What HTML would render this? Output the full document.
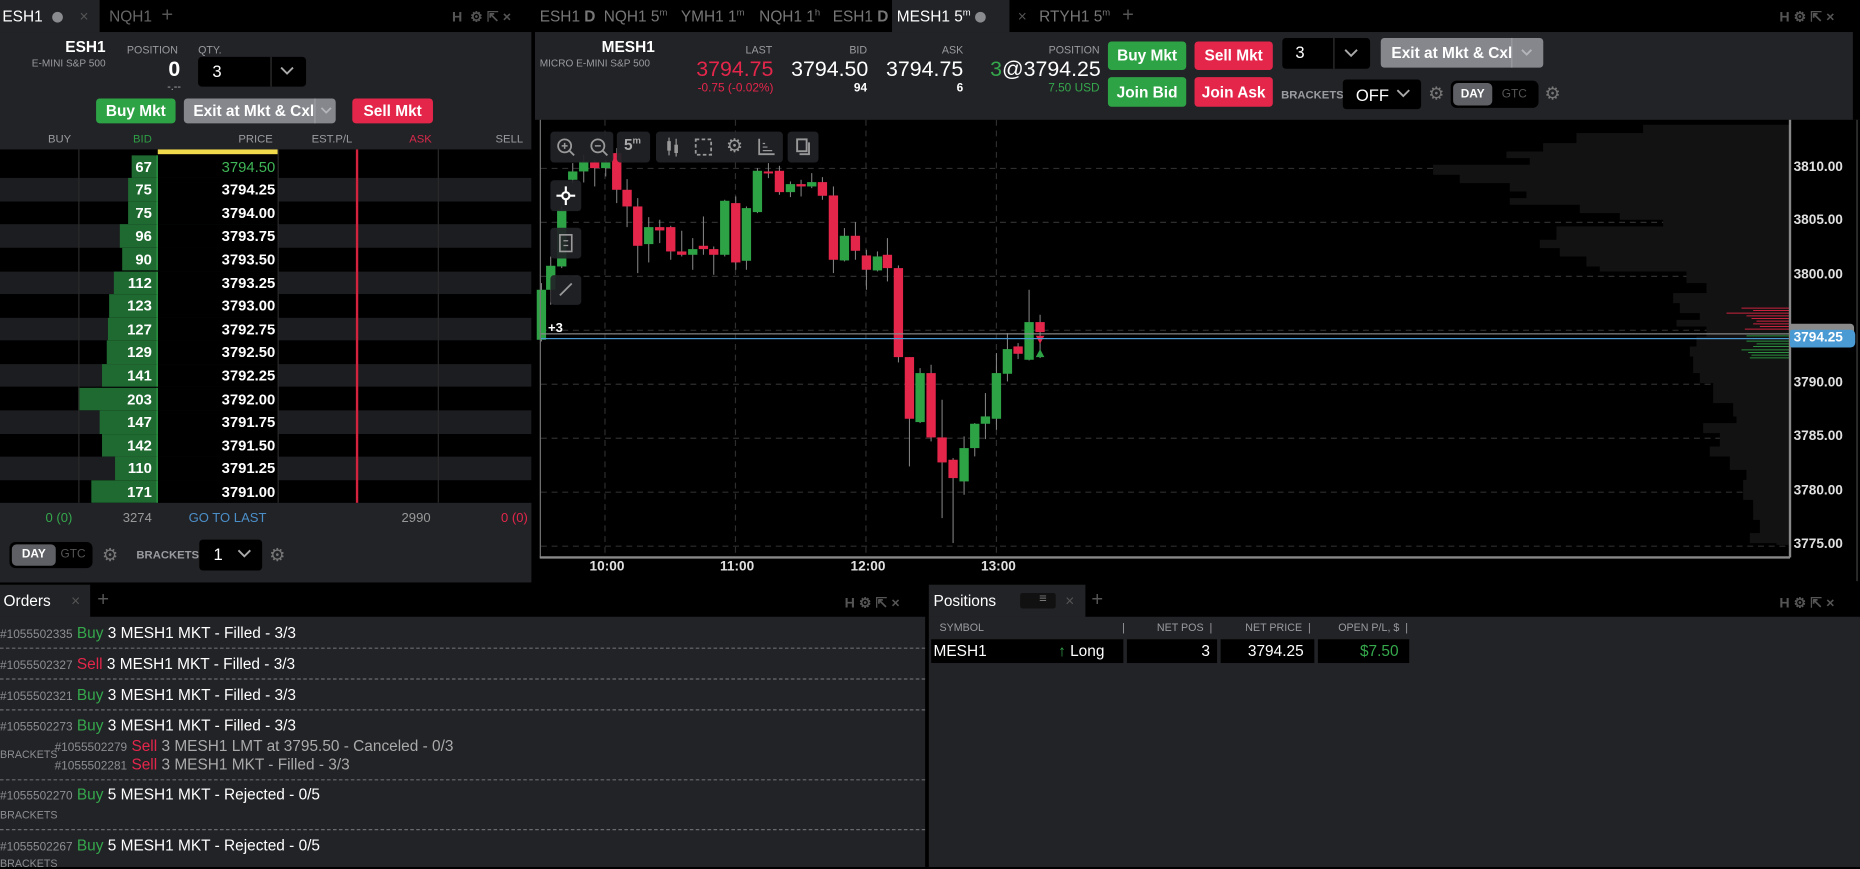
<!DOCTYPE html>
<html><head><meta charset="utf-8"><style>
*{box-sizing:border-box;margin:0;padding:0}
html,body{width:1860px;height:867px;overflow:hidden;background:#000;font-family:"Liberation Sans",sans-serif;color:#fff}
#w{position:absolute;left:0;top:0;width:1568px;height:731px;transform:scale(1.18622,1.18605);transform-origin:0 0;background:#000}
.a{position:absolute;white-space:nowrap}
.pan{background:#222327}
.lbl{font-size:9px;color:#9a9ba0}
.r{text-align:right}
.btn{position:absolute;border-radius:3px;font-size:13px;text-align:center;color:#fff;font-weight:bold}
.g{background:#2ea346}.rd{background:#e4264b}.gy{background:#85878d}
.blk{position:absolute;background:#000;border-radius:3px}
.ico{color:#555;font-size:12px;font-weight:bold}
.row{position:absolute;left:0;width:448px;height:19.6px}
.tb{position:absolute;background:#222327;border-radius:3px;opacity:.92}
.ord{position:absolute;left:0;font-size:13px;color:#fff}
.ord i{font-style:normal;font-size:10px;color:#8d8e92}
.gr{color:#35a84c}.rr{color:#e4264b}
.sep{position:absolute;left:0;width:780px;border-top:1px dashed #6a6b70}
.pl{position:absolute;left:1512px;font-size:11.5px;color:#e0e0e0;font-weight:bold}
</style></head><body><div id="w">

<!-- LEFT PANEL -->
<div class="a" style="left:0;top:0;width:448px;height:27px;background:#000"></div>
<div class="a pan" style="left:0;top:0;width:84px;height:27px"></div>
<div class="a" style="left:2px;top:6px;font-size:13px">ESH1</div>
<div class="a" style="left:44px;top:10px;width:9px;height:9px;border-radius:50%;background:#8a8b8f"></div>
<div class="a" style="left:67px;top:6px;font-size:13px;color:#555">×</div>
<div class="a" style="left:92px;top:6px;font-size:13px;color:#666">NQH1</div>
<div class="a" style="left:136px;top:3px;font-size:17px;color:#555">+</div>
<div class="a ico" style="left:381px;top:7px">H &nbsp;⚙ ⇱ ×</div>

<div class="a pan" style="left:0;top:27px;width:448px;height:464px"></div>
<div class="a r" style="left:0;width:89px;top:32px;font-size:13px;font-weight:bold">ESH1</div>
<div class="a r lbl" style="left:0;width:89px;top:48px;font-size:8.5px">E-MINI S&amp;P 500</div>
<div class="a lbl" style="left:107px;top:37px">POSITION</div>
<div class="a r" style="left:100px;width:52px;top:48px;font-size:18px;font-weight:bold">0</div>
<div class="a" style="left:141px;top:68px;font-size:9px;color:#aaa">-.--</div>
<div class="a lbl" style="left:167px;top:37px">QTY.</div>
<div class="blk" style="left:167px;top:48px;width:91px;height:25px"></div>
<div class="a" style="left:179px;top:52px;font-size:14px">3</div>
<div class="a" style="left:228px;top:48px;width:1px;height:25px;background:#333"></div>
<svg class="a" style="left:236px;top:56px" width="12" height="8"><polyline points="1,1 6,6 11,1" fill="none" stroke="#aaa" stroke-width="1.6"/></svg>
<div class="btn g" style="left:81px;top:83px;width:67px;height:21px;line-height:21px">Buy Mkt</div>
<div class="btn gy" style="left:155px;top:83px;width:128px;height:21px;line-height:21px;text-align:left;padding-left:8px">Exit at Mkt &amp; Cxl</div>
<div class="a" style="left:265px;top:83px;width:1px;height:21px;background:#9c9ea3"></div>
<svg class="a" style="left:270px;top:90px" width="10" height="7"><polyline points="1,1 5,5 9,1" fill="none" stroke="#b5b6ba" stroke-width="1.5"/></svg>
<div class="btn rd" style="left:297px;top:83px;width:68px;height:21px;line-height:21px">Sell Mkt</div>

<div class="a lbl r" style="left:0;width:60px;top:112px;font-size:9.5px">BUY</div>
<div class="a lbl r" style="left:66px;width:62px;top:112px;font-size:9.5px;color:#2e9e45">BID</div>
<div class="a lbl r" style="left:133px;width:97px;top:112px;font-size:9.5px">PRICE</div>
<div class="a lbl r" style="left:234px;width:63px;top:112px;font-size:9.5px">EST.P/L</div>
<div class="a lbl r" style="left:301px;width:63px;top:112px;font-size:9.5px;color:#d9294b">ASK</div>
<div class="a lbl r" style="left:369px;width:72px;top:112px;font-size:9.5px">SELL</div>

<div class="a" style="left:0;top:126px;width:448px;height:298px;background:#000;overflow:hidden">
<div id="lad"></div>
</div>
<div class="a" style="left:133px;top:126px;width:101px;height:4px;background:#f0d94a"></div>
<div class="a" style="left:300px;top:126px;width:2px;height:298px;background:#d4233f"></div>

<div class="a pan" style="left:0;top:424px;width:448px;height:67px"></div>
<div class="a r gr" style="left:0;width:61px;top:431px;font-size:11px">0 (0)</div>
<div class="a r" style="left:66px;width:62px;top:431px;font-size:11px;color:#999">3274</div>
<div class="a" style="left:159px;top:431px;font-size:11px;color:#4b8fc9">GO TO LAST</div>
<div class="a r" style="left:301px;width:62px;top:431px;font-size:11px;color:#999">2990</div>
<div class="a r rr" style="left:369px;width:76px;top:431px;font-size:11px">0 (0)</div>
<div class="blk" style="left:8px;top:457px;width:70px;height:22px;border-radius:5px"></div>
<div class="a" style="left:10px;top:459px;width:37px;height:18px;background:#5f6065;border-radius:4px;font-size:10px;font-weight:bold;text-align:center;line-height:18px">DAY</div>
<div class="a" style="left:51px;top:462px;font-size:10px;color:#555">GTC</div>
<div class="a" style="left:86px;top:459px;font-size:15px;color:#777">⚙</div>
<div class="a" style="left:115px;top:463px;font-size:9.5px;color:#9a9ba0;font-weight:bold">BRACKETS</div>
<div class="blk" style="left:168px;top:455px;width:53px;height:26px"></div>
<div class="a" style="left:180px;top:459px;font-size:14px">1</div>
<svg class="a" style="left:200px;top:463px" width="12" height="8"><polyline points="1,1 6,6 11,1" fill="none" stroke="#aaa" stroke-width="1.6"/></svg>
<div class="a" style="left:227px;top:459px;font-size:15px;color:#777">⚙</div>

<!-- RIGHT CHART PANEL -->
<div class="a pan" style="left:752px;top:0;width:99px;height:27px"></div>
<div class="a" style="left:455px;top:6px;font-size:13px;color:#777">ESH1 <b>D</b></div>
<div class="a" style="left:509px;top:6px;font-size:13px;color:#777">NQH1 5<sup style="font-size:8px">m</sup></div>
<div class="a" style="left:574px;top:6px;font-size:13px;color:#777">YMH1 1<sup style="font-size:8px">m</sup></div>
<div class="a" style="left:640px;top:6px;font-size:13px;color:#777">NQH1 1<sup style="font-size:8px">h</sup></div>
<div class="a" style="left:702px;top:6px;font-size:13px;color:#777">ESH1 <b>D</b></div>
<div class="a" style="left:756px;top:6px;font-size:13px;color:#fff">MESH1 5<sup style="font-size:8px">m</sup></div>
<div class="a" style="left:822px;top:10px;width:9px;height:9px;border-radius:50%;background:#8a8b8f"></div>
<div class="a" style="left:858px;top:6px;font-size:13px;color:#555">×</div>
<div class="a" style="left:876px;top:6px;font-size:13px;color:#777">RTYH1 5<sup style="font-size:8px">m</sup></div>
<div class="a" style="left:946px;top:3px;font-size:17px;color:#555">+</div>
<div class="a ico" style="left:1500px;top:7px">H ⚙ ⇱ ×</div>

<div class="a pan" style="left:451px;top:27px;width:1117px;height:74px"></div>
<div class="a" style="left:1562px;top:27px;width:6px;height:74px;background:#000"></div>
<div class="a r" style="left:455px;width:97px;top:32px;font-size:13px;font-weight:bold">MESH1</div>
<div class="a lbl" style="left:455px;top:48px;font-size:8.5px">MICRO E-MINI S&amp;P 500</div>
<div class="a lbl r" style="left:580px;width:71px;top:37px">LAST</div>
<div class="a r rr" style="left:560px;width:92px;top:48px;font-size:18px">3794.75</div>
<div class="a r rr" style="left:560px;width:92px;top:69px;font-size:10px">-0.75 (-0.02%)</div>
<div class="a lbl r" style="left:660px;width:71px;top:37px">BID</div>
<div class="a r" style="left:640px;width:92px;top:48px;font-size:18px">3794.50</div>
<div class="a r" style="left:660px;width:71px;top:69px;font-size:10px;font-weight:bold">94</div>
<div class="a lbl r" style="left:740px;width:72px;top:37px">ASK</div>
<div class="a r" style="left:720px;width:92px;top:48px;font-size:18px">3794.75</div>
<div class="a r" style="left:740px;width:72px;top:69px;font-size:10px;font-weight:bold">6</div>
<div class="a lbl r" style="left:850px;width:77px;top:37px">POSITION</div>
<div class="a r" style="left:820px;width:108px;top:48px;font-size:18px"><span class="gr">3</span>@3794.25</div>
<div class="a r gr" style="left:850px;width:77px;top:69px;font-size:10px">7.50 USD</div>
<div class="btn g" style="left:934px;top:35px;width:66px;height:24px;line-height:24px">Buy Mkt</div>
<div class="btn rd" style="left:1007px;top:35px;width:66px;height:24px;line-height:24px">Sell Mkt</div>
<div class="btn g" style="left:934px;top:65px;width:66px;height:25px;line-height:25px">Join Bid</div>
<div class="btn rd" style="left:1007px;top:65px;width:66px;height:25px;line-height:25px">Join Ask</div>
<div class="blk" style="left:1081px;top:32px;width:74px;height:26px"></div>
<div class="a" style="left:1092px;top:36px;font-size:14px">3</div>
<div class="a" style="left:1124px;top:32px;width:1px;height:26px;background:#333"></div>
<svg class="a" style="left:1133px;top:41px" width="12" height="8"><polyline points="1,1 6,6 11,1" fill="none" stroke="#aaa" stroke-width="1.6"/></svg>
<div class="btn gy" style="left:1164px;top:32px;width:137px;height:25px;line-height:25px;text-align:left;padding-left:9px">Exit at Mkt &amp; Cxl</div>
<div class="a" style="left:1274px;top:32px;width:1px;height:25px;background:#9c9ea3"></div>
<svg class="a" style="left:1282px;top:41px" width="10" height="7"><polyline points="1,1 5,5 9,1" fill="none" stroke="#b5b6ba" stroke-width="1.5"/></svg>
<div class="a" style="left:1080px;top:75px;font-size:9.5px;color:#9a9ba0;font-weight:bold">BRACKETS</div>
<div class="blk" style="left:1132px;top:67px;width:66px;height:25px"></div>
<div class="a" style="left:1143px;top:72px;font-size:14px">OFF</div>
<svg class="a" style="left:1177px;top:75px" width="12" height="8"><polyline points="1,1 6,6 11,1" fill="none" stroke="#aaa" stroke-width="1.6"/></svg>
<div class="a" style="left:1204px;top:70px;font-size:15px;color:#777">⚙</div>
<div class="blk" style="left:1223px;top:68px;width:74px;height:23px;border-radius:5px"></div>
<div class="a" style="left:1225px;top:70px;width:33px;height:19px;background:#5f6065;border-radius:4px;font-size:10px;font-weight:bold;text-align:center;line-height:19px">DAY</div>
<div class="a" style="left:1266px;top:74px;font-size:10px;color:#555">GTC</div>
<div class="a" style="left:1302px;top:70px;font-size:15px;color:#777">⚙</div>

<!-- chart -->
<svg class="a" style="left:0;top:0" width="1568" height="731">
<g stroke="#2e2e2e" stroke-dasharray="5,4" stroke-width="1">
<line x1="510" y1="101" x2="510" y2="469"/><line x1="620" y1="101" x2="620" y2="469"/><line x1="730" y1="101" x2="730" y2="469"/><line x1="840" y1="101" x2="840" y2="469"/>
<line x1="456" y1="142" x2="1508" y2="142"/><line x1="456" y1="187.5" x2="1508" y2="187.5"/><line x1="456" y1="233" x2="1508" y2="233"/><line x1="456" y1="278.5" x2="1508" y2="278.5"/><line x1="456" y1="324" x2="1508" y2="324"/><line x1="456" y1="369.5" x2="1508" y2="369.5"/><line x1="456" y1="415" x2="1508" y2="415"/><line x1="456" y1="460.5" x2="1508" y2="460.5"/>
</g>
</svg>
<svg class="a" style="left:1180.4px;top:101.2px" width="387.9" height="387.9" viewBox="0 0 1380 1380">
<path fill="#121212" d="M1168 15 H730 V40 H530 V70 H430 V95 H320 V115 H390 V135 H100 V165 H180 V190 H330 V215 H380 V235 H330 V255 H540 V280 H660 V300 H790 V320 H470 V360 H420 V385 H480 V410 H560 V440 H600 V455 H860 V490 H920 V520 H820 V550 H840 V580 H900 V600 H830 V620 H920 V650 H890 V680 H870 V710 H880 V760 H900 V790 H940 V850 H1000 V890 H1010 V910 H910 V940 H960 V980 H930 V1010 H990 V1050 H1040 V1080 H1030 V1140 H1060 V1200 H1080 V1240 H1050 V1270 H1130 V1275 H1168 Z"/>
<g stroke="#c8223f" stroke-width="3"><line x1="1025" y1="565" x2="1168" y2="565"/><line x1="1060" y1="572" x2="1168" y2="572"/><line x1="980" y1="580" x2="1168" y2="580"/><line x1="1040" y1="588" x2="1168" y2="588"/><line x1="1055" y1="596" x2="1168" y2="596"/><line x1="1070" y1="604" x2="1168" y2="604"/><line x1="1060" y1="612" x2="1168" y2="612"/><line x1="1080" y1="620" x2="1168" y2="620"/><line x1="1035" y1="628" x2="1168" y2="628"/></g>
<g stroke="#2a8f3e" stroke-width="3"><line x1="1040" y1="648" x2="1168" y2="648"/><line x1="1060" y1="656" x2="1168" y2="656"/><line x1="1040" y1="664" x2="1168" y2="664"/><line x1="1070" y1="672" x2="1168" y2="672"/><line x1="1060" y1="680" x2="1168" y2="680"/><line x1="1025" y1="690" x2="1168" y2="690"/><line x1="1045" y1="698" x2="1168" y2="698"/><line x1="1055" y1="706" x2="1168" y2="706"/><line x1="1050" y1="714" x2="1168" y2="714"/></g>
</svg>
<svg class="a" style="left:455.3px;top:101.2px;overflow:visible" width="438.4" height="387.8" viewBox="0 0 1560 1380" id="cs"></svg>
<div class="a" style="left:456px;top:280.5px;width:1053px;height:1px;background:#8a8a8a"></div>
<div class="a" style="left:456px;top:285px;width:1053px;height:1px;background:#4a9ad4"></div>
<div class="a" style="left:462px;top:271px;font-size:11px;font-weight:bold">+3</div>
<div class="a" style="left:455px;top:101px;width:1px;height:369px;background:#777"></div>
<div class="a" style="left:455px;top:469px;width:1054px;height:1.5px;background:#888"></div>
<div class="a" style="left:1508px;top:101px;width:1.5px;height:369px;background:#888"></div>
<div class="a" style="left:1565px;top:101px;width:1px;height:389px;background:#444"></div>
<div class="pl" style="top:135px">3810.00</div><div class="pl" style="top:180px">3805.00</div><div class="pl" style="top:226px">3800.00</div>
<div class="pl" style="top:317px">3790.00</div><div class="pl" style="top:362px">3785.00</div><div class="pl" style="top:408px">3780.00</div><div class="pl" style="top:453px">3775.00</div>
<div class="a" style="left:1509px;top:273px;width:54px;height:12px;background:#8a8a8a;border-radius:0 3px 0 0"></div>
<div class="a" style="left:1509px;top:278px;width:55px;height:15px;background:#4a9ad4;border-radius:2px 4px 4px 2px;font-size:11.5px;font-weight:bold;line-height:15px;padding-left:3px">3794.25</div>
<div class="a" style="left:497px;top:472px;font-size:11.5px;font-weight:bold;color:#e0e0e0">10:00</div>
<div class="a" style="left:607px;top:472px;font-size:11.5px;font-weight:bold;color:#e0e0e0">11:00</div>
<div class="a" style="left:717px;top:472px;font-size:11.5px;font-weight:bold;color:#e0e0e0">12:00</div>
<div class="a" style="left:827px;top:472px;font-size:11.5px;font-weight:bold;color:#e0e0e0">13:00</div>

<!-- chart toolbar -->
<div class="tb" style="left:464px;top:111px;width:53px;height:26px"></div>
<svg class="a" style="left:469px;top:116px" width="16" height="16"><circle cx="7" cy="7" r="5.5" fill="none" stroke="#999" stroke-width="1.5"/><line x1="11" y1="11" x2="15" y2="15" stroke="#999" stroke-width="1.6"/><line x1="4.5" y1="7" x2="9.5" y2="7" stroke="#999" stroke-width="1.3"/><line x1="7" y1="4.5" x2="7" y2="9.5" stroke="#999" stroke-width="1.3"/></svg>
<svg class="a" style="left:497px;top:116px" width="16" height="16"><circle cx="7" cy="7" r="5.5" fill="none" stroke="#999" stroke-width="1.5"/><line x1="11" y1="11" x2="15" y2="15" stroke="#999" stroke-width="1.6"/><line x1="4.5" y1="7" x2="9.5" y2="7" stroke="#999" stroke-width="1.3"/></svg>
<div class="tb" style="left:520px;top:111px;width:28px;height:26px"></div>
<div class="a" style="left:526px;top:114px;font-size:13px;font-weight:bold;color:#aaa">5<sup style="font-size:8px">m</sup></div>
<div class="tb" style="left:553px;top:111px;width:107px;height:26px"></div>
<svg class="a" style="left:560px;top:115px" width="14" height="18"><line x1="4" y1="1" x2="4" y2="16" stroke="#999"/><rect x="2.5" y="4" width="3" height="8" fill="#999"/><line x1="10" y1="2" x2="10" y2="17" stroke="#999"/><rect x="8.5" y="7" width="3" height="7" fill="#999"/></svg>
<svg class="a" style="left:585px;top:116px" width="16" height="16"><rect x="1.5" y="1.5" width="13" height="13" fill="none" stroke="#999" stroke-width="1.5" stroke-dasharray="3,2"/></svg>
<div class="a" style="left:612px;top:113px;font-size:16px;color:#999">⚙</div>
<svg class="a" style="left:638px;top:116px" width="16" height="16"><polyline points="2,1 2,14 15,14" fill="none" stroke="#999" stroke-width="1.5"/><line x1="5" y1="11" x2="13" y2="11" stroke="#999"/><line x1="5" y1="8" x2="9" y2="8" stroke="#999"/><line x1="5" y1="5" x2="7" y2="5" stroke="#999"/></svg>
<div class="tb" style="left:664px;top:111px;width:26px;height:26px"></div>
<svg class="a" style="left:670px;top:116px" width="15" height="16"><rect x="2" y="1.5" width="8" height="10" fill="none" stroke="#999" stroke-width="1.6"/><polyline points="12,4 12,14 4,14" fill="none" stroke="#999" stroke-width="1.6"/></svg>
<div class="tb" style="left:464px;top:152px;width:26px;height:26px"></div>
<svg class="a" style="left:469px;top:157px" width="16" height="16"><circle cx="8" cy="8" r="3" fill="none" stroke="#fff" stroke-width="1.8"/><line x1="8" y1="0" x2="8" y2="5" stroke="#fff" stroke-width="1.8"/><line x1="8" y1="11" x2="8" y2="16" stroke="#fff" stroke-width="1.8"/><line x1="0" y1="8" x2="5" y2="8" stroke="#fff" stroke-width="1.8"/><line x1="11" y1="8" x2="16" y2="8" stroke="#fff" stroke-width="1.8"/></svg>
<div class="tb" style="left:464px;top:192px;width:26px;height:26px"></div>
<svg class="a" style="left:471px;top:197px" width="12" height="16"><rect x="1" y="1" width="10" height="14" fill="none" stroke="#999" stroke-width="1.4"/><line x1="4" y1="6" x2="8" y2="6" stroke="#999"/><line x1="4" y1="10" x2="8" y2="10" stroke="#999"/></svg>
<div class="tb" style="left:464px;top:232px;width:26px;height:25px"></div>
<svg class="a" style="left:470px;top:237px" width="14" height="14"><line x1="2" y1="12" x2="12" y2="2" stroke="#999" stroke-width="1.5"/></svg>

<!-- dividers -->
<div class="a" style="left:448px;top:0;width:3px;height:491px;background:#000"></div>

<!-- ORDERS -->
<div class="a pan" style="left:0;top:493px;width:76px;height:28px"></div>
<div class="a" style="left:3px;top:499px;font-size:13px">Orders</div>
<div class="a" style="left:60px;top:499px;font-size:13px;color:#555">×</div>
<div class="a" style="left:82px;top:496px;font-size:17px;color:#555">+</div>
<div class="a ico" style="left:712px;top:501px">H ⚙ ⇱ ×</div>
<div class="a pan" style="left:0;top:520px;width:780px;height:211px"></div>
<div class="ord" style="top:526px"><i>#1055502335</i> <span class="gr">Buy</span> 3 MESH1 MKT - Filled - 3/3</div>
<div class="sep" style="top:546px"></div>
<div class="ord" style="top:552px"><i>#1055502327</i> <span class="rr">Sell</span> 3 MESH1 MKT - Filled - 3/3</div>
<div class="sep" style="top:572px"></div>
<div class="ord" style="top:578px"><i>#1055502321</i> <span class="gr">Buy</span> 3 MESH1 MKT - Filled - 3/3</div>
<div class="sep" style="top:598px"></div>
<div class="ord" style="top:604px"><i>#1055502273</i> <span class="gr">Buy</span> 3 MESH1 MKT - Filled - 3/3</div>
<div class="ord" style="left:46px;top:621px;color:#aaa"><i>#1055502279</i> <span class="rr">Sell</span> 3 MESH1 LMT at 3795.50 - Canceled - 0/3</div>
<div class="a" style="left:0;top:631px;font-size:9px;color:#8d8e92">BRACKETS</div>
<div class="ord" style="left:46px;top:637px;color:#aaa"><i>#1055502281</i> <span class="rr">Sell</span> 3 MESH1 MKT - Filled - 3/3</div>
<div class="sep" style="top:657px"></div>
<div class="ord" style="top:662px"><i>#1055502270</i> <span class="gr">Buy</span> 5 MESH1 MKT - Rejected - 0/5</div>
<div class="a" style="left:0;top:682px;font-size:9px;color:#8d8e92">BRACKETS</div>
<div class="sep" style="top:699px"></div>
<div class="ord" style="top:705px"><i>#1055502267</i> <span class="gr">Buy</span> 5 MESH1 MKT - Rejected - 0/5</div>
<div class="a" style="left:0;top:723px;font-size:9px;color:#8d8e92">BRACKETS</div>
<div class="a" style="left:780px;top:493px;width:3px;height:238px;background:#000"></div>

<!-- POSITIONS -->
<div class="a pan" style="left:783px;top:493px;width:132px;height:28px"></div>
<div class="a" style="left:787px;top:499px;font-size:13px">Positions</div>
<div class="a" style="left:860px;top:500px;width:30px;height:13px;background:#111;border-radius:2px"></div>
<div class="a" style="left:876px;top:499px;font-size:11px;color:#777">≡</div>
<div class="a" style="left:898px;top:499px;font-size:13px;color:#555">×</div>
<div class="a" style="left:920px;top:496px;font-size:17px;color:#555">+</div>
<div class="a ico" style="left:1500px;top:501px">H ⚙ ⇱ ×</div>
<div class="a pan" style="left:783px;top:520px;width:785px;height:211px"></div>
<div class="a lbl" style="left:792px;top:524px">SYMBOL</div>
<div class="a lbl" style="left:946px;top:524px">|</div>
<div class="a lbl r" style="left:960px;width:62px;top:524px">NET POS &nbsp;|</div>
<div class="a lbl r" style="left:1030px;width:75px;top:524px">NET PRICE &nbsp;|</div>
<div class="a lbl r" style="left:1110px;width:77px;top:524px">OPEN P/L, $ &nbsp;|</div>
<div class="a" style="left:785px;top:539px;width:162px;height:20px;background:#000"></div>
<div class="a" style="left:950px;top:539px;width:76px;height:20px;background:#000"></div>
<div class="a" style="left:1029px;top:539px;width:79px;height:20px;background:#000"></div>
<div class="a" style="left:1111px;top:539px;width:77px;height:20px;background:#000"></div>
<div class="a" style="left:787px;top:541px;font-size:13px">MESH1</div>
<div class="a" style="left:892px;top:541px;font-size:13px"><span class="gr">↑</span> Long</div>
<div class="a r" style="left:950px;width:70px;top:541px;font-size:13px">3</div>
<div class="a r" style="left:1029px;width:70px;top:541px;font-size:13px">3794.25</div>
<div class="a r gr" style="left:1111px;width:68px;top:541px;font-size:13px">$7.50</div>

<script>
(function(){
var rows=[[67,"3794.50"],[75,"3794.25"],[75,"3794.00"],[96,"3793.75"],[90,"3793.50"],[112,"3793.25"],[123,"3793.00"],[127,"3792.75"],[129,"3792.50"],[141,"3792.25"],[203,"3792.00"],[147,"3791.75"],[142,"3791.50"],[110,"3791.25"],[171,"3791.00"],[181,"3790.75"]];
var h="";
rows.forEach(function(r,i){
 var y=4.5+i*19.6, w=Math.round(r[0]*0.33);
 h+='<div class="row" style="top:'+y+'px;background:'+(i%2?'#1c1d20':'#000')+'"></div>';
 h+='<div class="a" style="left:133px;top:'+y+'px;width:101px;height:19.6px;background:#000"></div>';
 h+='<div class="a" style="left:'+(133-w)+'px;top:'+y+'px;width:'+w+'px;height:19.6px;background:#1f6a31"></div>';
 h+='<div class="a" style="left:131.5px;top:'+y+'px;width:1.5px;height:19.6px;background:#2ea346"></div>';
 h+='<div class="a r" style="left:66px;width:62px;top:'+(y+3)+'px;font-size:12.5px;font-weight:bold">'+r[0]+'</div>';
 h+='<div class="a r" style="left:133px;width:99px;top:'+(y+3)+'px;font-size:12.5px;font-weight:bold;'+(i==0?'color:#3fb657;font-weight:normal':'')+'">'+r[1]+'</div>';
});
h+='<div class="a" style="left:66px;top:0;width:1px;height:298px;background:#2a2a2a"></div><div class="a" style="left:234px;top:0;width:1px;height:298px;background:#2a2a2a"></div><div class="a" style="left:369px;top:0;width:1px;height:298px;background:#2a2a2a"></div>';
document.getElementById('lad').innerHTML=h;
var c=[[5,'g',510,660,490,665],[33,'g',438,510,410,555],[66,'g',270,440,260,445],[99,'g',155,180,130,190],[132,'g',125,155,105,188],[165,'r',128,145,120,200],[198,'g',128,145,120,170],[231,'r',100,210,85,250],[262,'r',210,260,178,322],[294,'r',260,378,235,460],[327,'g',322,373,292,428],[360,'r',322,332,300,370],[393,'r',322,395,318,420],[426,'r',395,405,333,410],[459,'g',388,405,355,450],[491,'r',378,388,290,405],[522,'r',388,405,380,465],[555,'g',243,405,240,410],[588,'r',250,428,230,450],[620,'g',265,423,260,450],[653,'g',153,277,145,280],[686,'r',155,160,130,175],[719,'r',153,217,138,225],[752,'g',193,217,185,232],[784,'r',193,200,180,230],[816,'g',187,200,160,205],[848,'r',187,228,172,240],[881,'r',227,420,200,460],[914,'g',348,422,325,425],[947,'r',348,393,307,420],[980,'r',407,450,390,510],[1013,'g',410,452,395,455],[1043,'r',405,445,355,485],[1076,'r',445,712,437,728],[1109,'r',712,897,712,1040],[1141,'g',760,907,745,910],[1174,'r',760,953,735,965],[1207,'r',953,1028,840,1195],[1240,'r',1020,1075,1015,1270],[1273,'g',985,1085,950,1125],[1305,'g',912,985,910,1010],[1337,'g',890,912,820,958],[1370,'g',760,897,700,930],[1403,'g',688,762,640,785],[1435,'r',680,702,670,718],[1468,'g',607,720,510,722],[1501,'r',607,637,585,715]];
var s="";
c.forEach(function(k){
 var col=k[1]=='g'?'#2ea346':'#e4264b';
 s+='<line x1="'+k[0]+'" y1="'+k[4]+'" x2="'+k[0]+'" y2="'+k[5]+'" stroke="#8a8a8a" stroke-width="3"/>';
 s+='<rect x="'+(k[0]-14)+'" y="'+k[2]+'" width="28" height="'+Math.max(6,k[3]-k[2])+'" fill="'+col+'"/>';
});
s+='<path d="M1488 648 L1514 648 L1501 672 Z" fill="#e4264b"/><path d="M1488 712 L1514 712 L1501 688 Z" fill="#2ea346"/>';
document.getElementById('cs').innerHTML=s;
})();
</script>
</div></body></html>
